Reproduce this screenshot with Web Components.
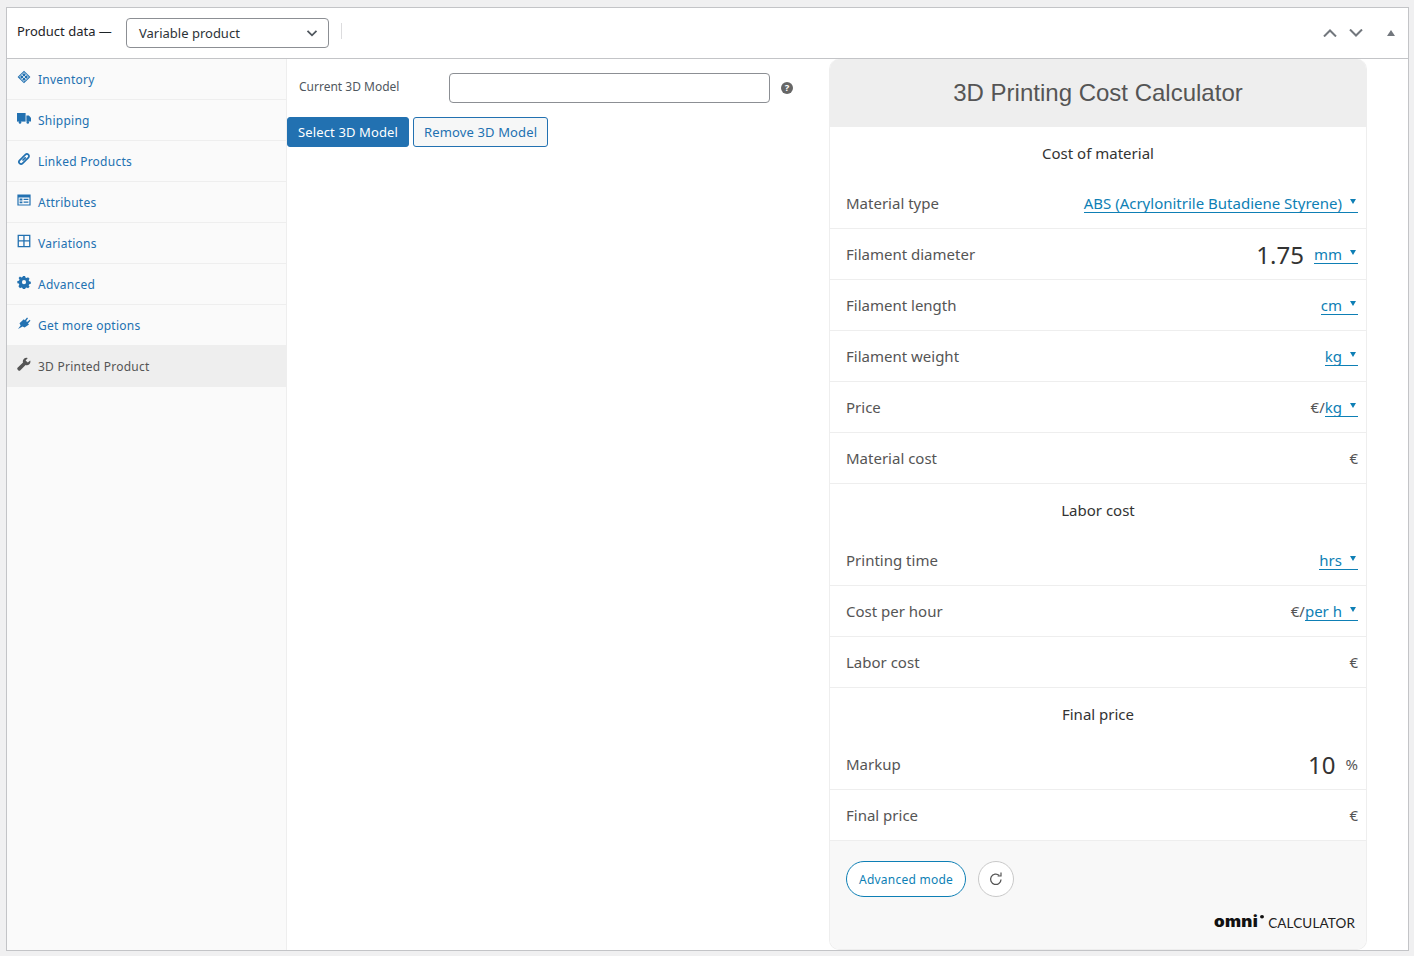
<!DOCTYPE html>
<html lang="en">
<head>
<meta charset="utf-8">
<title>Product data</title>
<style>
  html, body { margin: 0; padding: 0; height: 100%; }
  body { background: #f0f0f1; font-family: "Noto Sans", "Open Sans", sans-serif; overflow: hidden; }
</style>
</head>
<body>
<product-data-box>
  <pd-tab slot="tabs" icon="inventory">Inventory</pd-tab>
  <pd-tab slot="tabs" icon="shipping">Shipping</pd-tab>
  <pd-tab slot="tabs" icon="linked">Linked Products</pd-tab>
  <pd-tab slot="tabs" icon="attributes">Attributes</pd-tab>
  <pd-tab slot="tabs" icon="variations">Variations</pd-tab>
  <pd-tab slot="tabs" icon="advanced">Advanced</pd-tab>
  <pd-tab slot="tabs" icon="plugin">Get more options</pd-tab>
  <pd-tab slot="tabs" icon="wrench" active>3D Printed Product</pd-tab>

  <model-form></model-form>

  <omni-calc title="3D Printing Cost Calculator">
    <calc-heading>Cost of material</calc-heading>
    <calc-row label="Material type" unit="ABS (Acrylonitrile Butadiene Styrene)"></calc-row>
    <calc-row label="Filament diameter" value="1.75" unit="mm"></calc-row>
    <calc-row label="Filament length" unit="cm"></calc-row>
    <calc-row label="Filament weight" unit="kg"></calc-row>
    <calc-row label="Price" prefix="€/" unit="kg"></calc-row>
    <calc-row label="Material cost" plain="€"></calc-row>
    <calc-heading>Labor cost</calc-heading>
    <calc-row label="Printing time" unit="hrs"></calc-row>
    <calc-row label="Cost per hour" prefix="€/" unit="per h"></calc-row>
    <calc-row label="Labor cost" plain="€"></calc-row>
    <calc-heading>Final price</calc-heading>
    <calc-row label="Markup" value="10" plain="%"></calc-row>
    <calc-row label="Final price" plain="€"></calc-row>
  </omni-calc>
</product-data-box>

<script>
const TAB_ICONS = {
  inventory: '<path d="M7 .8 13.4 7 7 13.2.6 7z"/><path d="M4.6 4.6 9.4 9.4M7 2.6 11.4 7M2.6 7 7 11.4M9.4 4.6 4.6 9.4M7 2.6 2.6 7M11.4 7 7 11.4" stroke="#fafafa" stroke-width=".8" fill="none"/>',
  shipping: '<path d="M0 2h8.6v8.6H0z"/><path d="M9.4 4.4h2.4l2.2 2.4v3.8H9.4z"/><circle cx="3" cy="11.4" r="1.3"/><circle cx="10.8" cy="11.4" r="1.3"/>',
  linked: '<path d="M6 8 8.2 5.8M5.4 5.6 2.6 8.4a2.1 2.1 0 0 0 3 3L8.4 8.6M5.6 5.4l2.8-2.8a2.1 2.1 0 0 1 3 3L8.6 8.4" fill="none" stroke="currentColor" stroke-width="1.7" stroke-linecap="round"/>',
  attributes: '<path fill-rule="evenodd" d="M.4 1.4h13.2v11.2H.4zM1.6 4.4v7h10.8v-7z"/><path d="M2.6 5.6h2.8v2H2.6zM2.6 8.6h2.8v1.6H2.6zM6.6 5.8h4.8v1.2H6.6zM6.6 8.6h4.8v1.2H6.6z"/>',
  variations: '<path fill-rule="evenodd" d="M.6.8h12.8v12.4H.6zM1.9 2.1v4.2h4.4V2.1zM7.6 2.1v4.2h4.5V2.1zM1.9 7.6v4.3h4.4V7.6zM7.6 7.6v4.3h4.5V7.6z"/>',
  advanced: '<path fill-rule="evenodd" d="M5.8.6h2.4l.4 1.8 1.3.6 1.6-1 1.7 1.7-1 1.6.6 1.3 1.8.4v2.4l-1.8.4-.6 1.3 1 1.6-1.7 1.7-1.6-1-1.3.6-.4 1.8H5.8l-.4-1.8-1.3-.6-1.6 1L.8 12l1-1.6-.6-1.3L-.4 8.7V6.3l1.8-.4.6-1.3-1-1.6L2.500 1.300l1.600 1 1.300-.6zM7 5.200a2.300 2.300 0 1 0 0 4.600 2.300 2.300 0 0 0 0-4.600z" transform="translate(.7 .4) scale(.9)"/>',
  plugin: '<path d="M1 13 3.600 9.400 2.500 7.200 6.800 3.200 7.800 4.200 10 1.400 11 2.200 9 5.200 10.400 5.800 12.800 3.800 13.400 4.800 11 7.400 12 8.400 7.600 11.400 5.600 10.400z"/>',
  wrench: '<path d="M13.200 3.400 10.800 5.600 8.600 3.400 10.800 1a3.600 3.600 0 0 0-4.800 4.400L.8 10.600a1.500 1.500 0 0 0 0 2.200l.4.400a1.500 1.500 0 0 0 2.200 0l5.200-5.200a3.600 3.600 0 0 0 4.600-4.600z"/>'
};

class ProductDataBox extends HTMLElement {
  constructor() {
    super();
    this.attachShadow({ mode: 'open' });
    this.shadowRoot.innerHTML = `
      <style>
        :host { display: flex; flex-direction: column; box-sizing: border-box; width: 1403px; height: 944px;
                margin: 7px 0 0 6px; background: #fff; border: 1px solid #c3c4c7; color: #1d2327; }
        .head { display: flex; align-items: center; box-sizing: border-box; height: 51px; flex: none;
                padding: 0 0 0 10px; border-bottom: 1px solid #c3c4c7; font-size: 13px; }
        .title { margin-top: -4px; width: 109px; flex: none; white-space: nowrap; }
        .select { box-sizing: border-box; width: 203px; height: 30px; margin-top: 0; padding: 0 12px; display: flex;
                  align-items: center; justify-content: space-between; background: #fff; border: 1px solid #8c8f94;
                  border-radius: 4px; color: #2c3338; font-size: 13px; }
        .select svg { margin-right: -4px; }
        .sep { width: 1px; height: 16px; margin: -4px 0 0 12px; background: #dcdcde; }
        .spacer { flex: 1; }
        .ctrl { display: flex; align-items: center; gap: 12px; margin: 0 13px 0 0; }
        .ctrl svg { display: block; fill: none; stroke: #72777d; stroke-width: 2; }
        .ctrl .tri { fill: #72777d; stroke: none; margin-left: 12px; }
        .body { flex: 1; display: flex; min-height: 0; }
        .tabs { width: 280px; flex: none; box-sizing: border-box; background: #fafafa; border-right: 1px solid #eee; }
        .main { width: 542px; flex: none; }
      </style>
      <div class="head">
        <span class="title">Product data —</span>
        <div class="select"><span>Variable product</span>
          <svg width="16" height="16" viewBox="0 0 16 16" fill="none" stroke="#50575e" stroke-width="1.8"><path d="M3.500 5.800 8 10.300 12.500 5.800"/></svg>
        </div>
        <div class="sep"></div>
        <div class="spacer"></div>
        <div class="ctrl">
          <svg width="14" height="8" viewBox="0 0 14 8"><path d="M1 7.500 7 1.500 13 7.500"/></svg>
          <svg width="14" height="8" viewBox="0 0 14 8"><path d="M1 .5 7 6.500 13 .5"/></svg>
          <svg class="tri" width="8" height="6" viewBox="0 0 8 6"><path d="M4 0 8 6H0z"/></svg>
        </div>
      </div>
      <div class="body">
        <div class="tabs"><slot name="tabs"></slot></div>
        <div class="main"><slot name="form"></slot><slot></slot></div>
        <slot name="calc"></slot>
      </div>`;
  }
}

class PdTab extends HTMLElement {
  constructor() {
    super();
    this.attachShadow({ mode: 'open' });
    const name = this.getAttribute('icon');
    this.shadowRoot.innerHTML = `
      <style>
        :host { display: flex; align-items: center; box-sizing: border-box; height: 41px; padding: 0 0 0 10px;
                border-bottom: 1px solid #eee; color: #2271b1; font-size: 12px; }
        :host([active]) { background: #eee; color: #555; width: 279px; }
        svg { width: 14px; height: 14px; flex: none; margin: -4px 7px 0 0; fill: currentColor; }
        span { margin-left: 0; padding-left: 0; letter-spacing: .02em; }
      </style>
      <svg viewBox="0 0 14 14">${TAB_ICONS[name] || ''}</svg><span><slot></slot></span>`;
  }
}

class ModelForm extends HTMLElement {
  constructor() {
    super();
    this.attachShadow({ mode: 'open' });
    this.shadowRoot.innerHTML = `
      <style>
        :host { display: block; font-size: 12px; }
        .row { display: flex; align-items: center; height: 30px; padding: 14px 0 0 12px; }
        label { width: 150px; flex: none; color: #50575e; margin-top: -4px; }
        .input { box-sizing: border-box; width: 321px; height: 30px; background: #fff; border: 1px solid #8c8f94; border-radius: 4px; }
        .help { width: 12px; height: 12px; margin: 0 0 0 11px; border-radius: 50%; background: #666; color: #fff;
                font: bold 9.5px/12px "Noto Sans", sans-serif; text-align: center; flex: none; }
        .btns { display: flex; gap: 4px; margin-top: 14px; }
        .btn { box-sizing: border-box; height: 30px; display: flex; align-items: center; padding: 0 10px; border-radius: 3px;
               border: 1px solid #2271b1; font-size: 13px; letter-spacing: .01em; white-space: nowrap; }
        .primary { background: #2271b1; color: #fff; }
        .secondary { background: #f6f7f7; color: #2271b1; }
      </style>
      <div class="row"><label>Current 3D Model</label><div class="input"></div><div class="help">?</div></div>
      <div class="btns"><div class="btn primary">Select 3D Model</div><div class="btn secondary">Remove 3D Model</div></div>`;
  }
}

class OmniCalc extends HTMLElement {
  constructor() {
    super();
    this.attachShadow({ mode: 'open' });
    this.shadowRoot.innerHTML = `
      <style>
        :host { display: flex; flex-direction: column; box-sizing: border-box; width: 538px; flex: none; background: #fff;
                border: 1px solid #eee; border-top: 0; border-radius: 10px; overflow: hidden; margin-bottom: 0; }
        h2 { margin: 0; height: 68px; flex: none; display: flex; align-items: center; justify-content: center; background: #eee;
             font: 400 24px "Liberation Sans", Arial, sans-serif; color: #555; }
        .rows { flex: none; }
        .foot { flex: 1; position: relative; background: #f8f8f8; padding: 20px 0 0 16px; }
        .actions { display: flex; align-items: center; gap: 12px; }
        .adv { box-sizing: border-box; height: 36px; display: flex; align-items: center; padding: 0 12px; background: #fff;
               border: 1px solid #0e7fb5; border-radius: 18px; color: #0e7fb5; font-size: 12px; letter-spacing: .02em; }
        .reset { box-sizing: border-box; width: 36px; height: 36px; display: flex; align-items: center; justify-content: center;
                 background: #fff; border: 1px solid #c9c9c9; border-radius: 50%; }
        .brand { display: flex; justify-content: flex-end; align-items: baseline; margin: 17px 11px 0 0; color: #111; }
        .omni { font: 900 17px/1 Inter, "Liberation Sans", sans-serif; letter-spacing: .02em; position: relative; padding-right: 6px; transform: scaleY(.88); }
        .omni::after { content: ""; position: absolute; right: 0; top: 0; width: 4px; height: 4px; border-radius: 50%; background: #111; }
        .calc { margin-left: 4px; font: 400 13.500px/1 "Lato", "Liberation Sans", sans-serif; letter-spacing: .01em; color: #222; }
      </style>
      <h2>${this.getAttribute('title')}</h2>
      <div class="rows"><slot></slot></div>
      <div class="foot">
        <div class="actions">
          <div class="adv">Advanced mode</div>
          <div class="reset"><svg width="16" height="16" viewBox="0 0 16 16" fill="none" stroke="#555" stroke-width="1.3"><path d="M13 8.400a5.200 5.200 0 1 1-1.700-4"/><path d="M13 1.600v3.400H9.600" stroke-width="1.200"/></svg></div>
        </div>
        <div class="brand"><span class="omni">omni</span><span class="calc">CALCULATOR</span></div>
      </div>`;
    this.removeAttribute('title');
    this.setAttribute('slot', 'calc');
  }
}

class CalcHeading extends HTMLElement {
  constructor() {
    super();
    this.attachShadow({ mode: 'open' });
    this.shadowRoot.innerHTML = `
      <style>
        :host { display: flex; align-items: center; justify-content: center; box-sizing: border-box; height: 51px;
                color: #333; font-size: 15px; padding-bottom: 0; }
      </style><slot></slot>`;
  }
}

class CalcRow extends HTMLElement {
  constructor() {
    super();
    this.attachShadow({ mode: 'open' });
    const label = this.getAttribute('label');
    const value = this.getAttribute('value');
    const unit = this.getAttribute('unit');
    const prefix = this.getAttribute('prefix');
    const plain = this.getAttribute('plain');
    this.shadowRoot.innerHTML = `
      <style>
        :host { display: flex; align-items: center; justify-content: space-between; box-sizing: border-box; height: 51px;
                padding: 0 8px 0 16px; border-bottom: 1px solid #eee; font-size: 15px; color: #555; }
        .right { display: flex; align-items: center; }
        .value { font-size: 24px; color: #333; margin-right: 10px; }
        .prefix, .plain { color: #555; }
        a { display: flex; align-items: center; color: #0e7fb5; border-bottom: 1px solid #0e7fb5; line-height: 18px; }
        a svg { margin: -3px 2px 0 8px; fill: #0e7fb5; }
      </style>
      <span>${label}</span>
      <span class="right">
        ${value ? `<span class="value">${value}</span>` : ''}
        ${prefix ? `<span class="prefix">${prefix}</span>` : ''}
        ${unit ? `<a>${unit}<svg width="6" height="5" viewBox="0 0 6 5"><path d="M0 0H6L3 5z"/></svg></a>` : ''}
        ${plain ? `<span class="plain">${plain}</span>` : ''}
      </span>`;
  }
}

customElements.define('product-data-box', ProductDataBox);
customElements.define('pd-tab', PdTab);
customElements.define('model-form', ModelForm);
customElements.define('calc-heading', CalcHeading);
customElements.define('calc-row', CalcRow);
customElements.define('omni-calc', OmniCalc);
document.querySelector('model-form').setAttribute('slot', 'form');
</script>
</body>
</html>
